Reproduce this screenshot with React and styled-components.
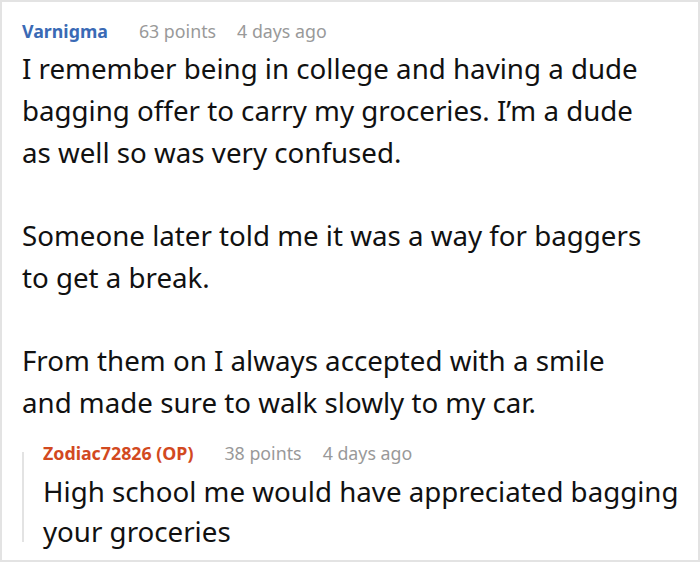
import React from 'react'
import styled, { createGlobalStyle } from 'styled-components'

const Global = createGlobalStyle`
  html, body { margin: 0; padding: 0; background: #fff; }
  body { font-family: "Noto Sans", "Open Sans", sans-serif; }
`

const Frame = styled.div`
  width: 700px;
  height: 562px;
  box-sizing: border-box;
  border: 2px solid #e3e3e3;
  padding: 16px 0 0 20px;
  overflow: hidden;
`

const Meta = styled.div`
  display: flex;
  align-items: baseline;
  font-size: 17.8px;
  line-height: 26px;
`

const Author = styled.span`
  font-weight: 700;
  color: ${p => (p.op ? '#d2491f' : '#3a6ab5')};
  margin-right: 31px;
`

const Info = styled.span`
  color: #999;
  & + & { margin-left: 21px; }
`

const Body = styled.div`
  font-size: 27.7px;
  line-height: 41.75px;
  color: #111;
  margin-top: 4px;
  p { margin: 0; }
  p + p { margin-top: 41.75px; }
`

const Reply = styled.div`
  position: relative;
  margin-top: 16px;
  padding-left: 21px;
  &::before {
    content: '';
    position: absolute;
    left: 0;
    top: 12px;
    bottom: 9px;
    width: 2px;
    background: #e3e3e3;
  }
`

const ReplyBody = styled(Body)`
  line-height: 40px;
  margin-top: 5px;
`

const Comment = ({ author, points, age, op, children }) => (
  <>
    <Meta>
      <Author op={op}>{author}</Author>
      <Info>{points} points</Info>
      <Info>{age}</Info>
    </Meta>
    {children}
  </>
)

export default function App() {
  return (
    <>
      <Global />
      <Frame>
        <Comment author="Varnigma" points={63} age="4 days ago">
          <Body>
            <p>I remember being in college and having a dude<br />bagging offer to carry my groceries. I’m a dude<br />as well so was very confused.</p>
            <p>Someone later told me it was a way for baggers<br />to get a break.</p>
            <p>From them on I always accepted with a smile<br />and made sure to walk slowly to my car.</p>
          </Body>
        </Comment>
        <Reply>
          <Comment author="Zodiac72826 (OP)" points={38} age="4 days ago" op>
            <ReplyBody>
              <p>High school me would have appreciated bagging<br />your groceries</p>
            </ReplyBody>
          </Comment>
        </Reply>
      </Frame>
    </>
  )
}
